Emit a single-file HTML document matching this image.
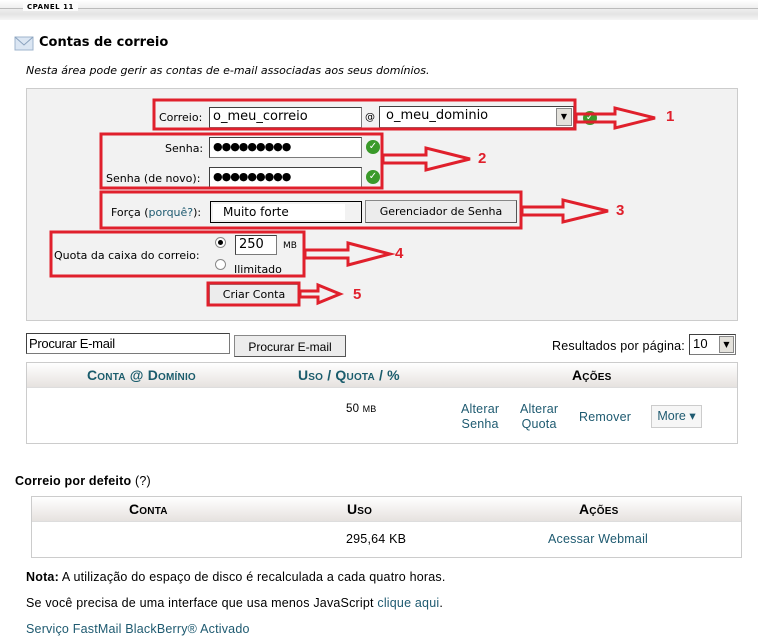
<!DOCTYPE html>
<html><head><meta charset="utf-8"><style>
*{margin:0;padding:0;box-sizing:border-box}
body{width:758px;height:637px;background:#fff;position:relative;overflow:hidden;font-family:"DejaVu Sans",Verdana,sans-serif;font-size:11px;color:#000}
.a{position:absolute;white-space:nowrap}
.in{position:absolute;background:#fff;border:1px solid #7a7a7a;border-top-color:#404040;border-left-color:#404040;font-size:13px;padding-left:3px;line-height:18px}
.btn{position:absolute;background:#ececec;border:1px solid #888;border-right-color:#555;border-bottom-color:#555;font-size:11px;text-align:center}
.t{font-family:"Liberation Sans",sans-serif;font-size:12.5px;letter-spacing:0.2px}
.lnk{color:#1e5a70}
.hd{position:absolute;background:linear-gradient(#fff,#e6e2df);border-bottom:1px solid #ddd}
.sc{font-family:"Liberation Sans",sans-serif;font-weight:bold;font-size:14px;font-variant:small-caps;position:absolute;white-space:nowrap;letter-spacing:0.2px}
.ck{position:absolute;width:14px;height:14px;border-radius:50%;background:#3a9a2a;color:#fff;font-size:10px;line-height:14px;text-align:center;font-weight:bold}
</style></head><body>
<div class="a" style="left:0;top:0;width:758px;height:20px;background:linear-gradient(#fff,#e4e4e4 70%,#f6f6f6)"></div>
<div class="a" style="left:0;top:8px;width:758px;height:1px;background:#bbb"></div>
<div class="a" style="left:23px;top:3px;background:#fbfbfb;padding:0 4px;font-size:7px;font-weight:bold;letter-spacing:.5px">CPANEL 11</div>

<svg class="a" style="left:14px;top:36px" width="20" height="16"><rect x="1" y="1" width="18" height="13" fill="#dbe6f3" stroke="#9fb4cc"/><path d="M1 1 L10 9 L19 1" fill="none" stroke="#8aa2be"/></svg>
<div class="a" style="left:39px;top:35px;font-size:13px;font-weight:bold">Contas de correio</div>
<div class="a" style="left:26px;top:64px;font-style:italic">Nesta área pode gerir as contas de e-mail associadas aos seus domínios.</div>

<div class="a" style="left:26px;top:88px;width:712px;height:233px;background:#f2f2f2;border:1px solid #ccc"></div>

<div class="a" style="left:159px;top:111px">Correio:</div>
<div class="in" style="left:209px;top:107px;width:153px;height:21px">o_meu_correio</div>
<div class="a" style="left:365px;top:112px;font-size:10px">@</div>
<div class="in" style="left:379px;top:106px;width:195px;height:22px;padding-left:6px">o_meu_dominio</div>
<div class="a" style="left:556px;top:108px;width:16px;height:18px;background:#e4e2dc;border:1px solid #888;font-size:8px;text-align:center;line-height:16px">▼</div>
<div class="ck" style="left:583px;top:111px">✓</div>

<div class="a" style="left:165px;top:142px">Senha:</div>
<div class="in" style="left:209px;top:137px;width:153px;height:21px;font-size:11px;letter-spacing:-1px">●●●●●●●●●</div>
<div class="ck" style="left:366px;top:140px">✓</div>
<div class="a" style="left:106px;top:172px">Senha (de novo):</div>
<div class="in" style="left:209px;top:167px;width:153px;height:21px;font-size:11px;letter-spacing:-1px">●●●●●●●●●</div>
<div class="ck" style="left:366px;top:170px">✓</div>

<div class="a" style="left:111px;top:206px">Força (<span class="lnk">porquê?</span>):</div>
<div class="a" style="left:210px;top:201px;width:152px;height:22px;border:1px solid #000;background:#f2f2f2"><div style="position:absolute;left:2px;top:2px;width:132px;height:16px;background:#fff"></div><span style="position:absolute;left:12px;top:3px;font-size:12px">Muito forte</span></div>
<div class="btn" style="left:365px;top:200px;width:152px;height:23px;line-height:21px">Gerenciador de Senha</div>

<div class="a" style="left:54px;top:249px">Quota da caixa do correio:</div>
<div class="a" style="left:215px;top:237px;width:11px;height:11px;border-radius:50%;background:#fff;border:1px solid #888"><div style="margin:2px;width:5px;height:5px;border-radius:50%;background:#000"></div></div>
<div class="in" style="left:235px;top:235px;width:42px;height:20px">250</div>
<div class="a" style="left:283px;top:241px;font-size:9px">MB</div>
<div class="a" style="left:215px;top:259px;width:11px;height:11px;border-radius:50%;background:#fff;border:1px solid #888"></div>
<div class="a" style="left:234px;top:263px">Ilimitado</div>

<div class="btn" style="left:209px;top:284px;width:90px;height:21px;line-height:19px">Criar Conta</div>

<svg class="a" style="left:0;top:0" width="758" height="330" fill="none" stroke="#e0202c" stroke-width="3">
<rect x="154" y="100" width="421" height="29"/>
<rect x="101" y="134" width="281" height="54"/>
<rect x="101" y="192" width="420" height="36"/>
<rect x="51" y="232" width="253" height="44"/>
<rect x="208" y="283" width="91" height="22"/>
<path d="M576 114H615V108L655 118L615 128V122H576Z"/>
<path d="M383 155H426V148L470 159L426 170V163H383Z"/>
<path d="M522 207H563V200L608 211L563 222V215H522Z"/>
<path d="M305 250H348V243L390 254L348 265V258H305Z"/>
<path d="M300 291H318V285L340 294L318 303V297H300Z"/>
</svg>
<div class="a" style="left:666px;top:108px;color:#e0202c;font-weight:bold;font-size:15px;font-family:'Liberation Sans',sans-serif">1</div>
<div class="a" style="left:478px;top:150px;color:#e0202c;font-weight:bold;font-size:15px;font-family:'Liberation Sans',sans-serif">2</div>
<div class="a" style="left:616px;top:202px;color:#e0202c;font-weight:bold;font-size:15px;font-family:'Liberation Sans',sans-serif">3</div>
<div class="a" style="left:395px;top:245px;color:#e0202c;font-weight:bold;font-size:15px;font-family:'Liberation Sans',sans-serif">4</div>
<div class="a" style="left:353px;top:286px;color:#e0202c;font-weight:bold;font-size:15px;font-family:'Liberation Sans',sans-serif">5</div>

<div class="in t" style="left:26px;top:333px;width:204px;height:21px;font-size:13px;line-height:19px;padding-left:2px;letter-spacing:-0.3px">Procurar E-mail</div>
<div class="btn t" style="left:234px;top:335px;width:112px;height:22px;line-height:22px;font-size:12px;letter-spacing:0">Procurar E-mail</div>
<div class="a t" style="left:552px;top:339px">Resultados por página:</div>
<div class="in t" style="left:689px;top:334px;width:47px;height:21px;font-size:13px">10</div>
<div class="a" style="left:719px;top:336px;width:15px;height:17px;background:#e4e2dc;border:1px solid #888;font-size:8px;text-align:center;line-height:15px">▼</div>

<div class="a" style="left:26px;top:362px;width:712px;height:82px;border:1px solid #ccc"></div>
<div class="hd" style="left:27px;top:363px;width:710px;height:25px"></div>
<div class="sc" style="left:87px;top:367px;color:#1a5c6c">Conta @ Domínio</div>
<div class="sc" style="left:298px;top:367px;color:#1a5c6c">Uso / Quota / %</div>
<div class="sc" style="left:572px;top:367px">Ações</div>
<div class="a t" style="left:346px;top:403px;font-size:11.5px">50 <span style="font-size:9px">MB</span></div>
<div class="a t lnk" style="left:461px;top:402px;text-align:center;line-height:15px">Alterar<br>Senha</div>
<div class="a t lnk" style="left:520px;top:402px;text-align:center;line-height:15px">Alterar<br>Quota</div>
<div class="a t lnk" style="left:579px;top:410px">Remover</div>
<div class="a t lnk" style="left:651px;top:405px;width:51px;height:23px;border:1px solid #ccc;background:#f6f6f6;line-height:21px;text-align:center;letter-spacing:0">More ▾</div>

<div class="a t" style="left:15px;top:474px"><b>Correio por defeito</b> (?)</div>
<div class="a" style="left:31px;top:496px;width:711px;height:62px;border:1px solid #ccc"></div>
<div class="hd" style="left:32px;top:497px;width:709px;height:25px"></div>
<div class="sc" style="left:129px;top:501px">Conta</div>
<div class="sc" style="left:347px;top:501px">Uso</div>
<div class="sc" style="left:579px;top:501px">Ações</div>
<div class="a t" style="left:346px;top:532px">295,64 KB</div>
<div class="a t lnk" style="left:548px;top:532px">Acessar Webmail</div>

<div class="a t" style="left:26px;top:570px"><b>Nota:</b> A utilização do espaço de disco é recalculada a cada quatro horas.</div>
<div class="a t" style="left:26px;top:596px">Se você precisa de uma interface que usa menos JavaScript <span class="lnk">clique aqui</span>.</div>
<div class="a t lnk" style="left:26px;top:622px">Serviço FastMail BlackBerry® Activado</div>
</body></html>
